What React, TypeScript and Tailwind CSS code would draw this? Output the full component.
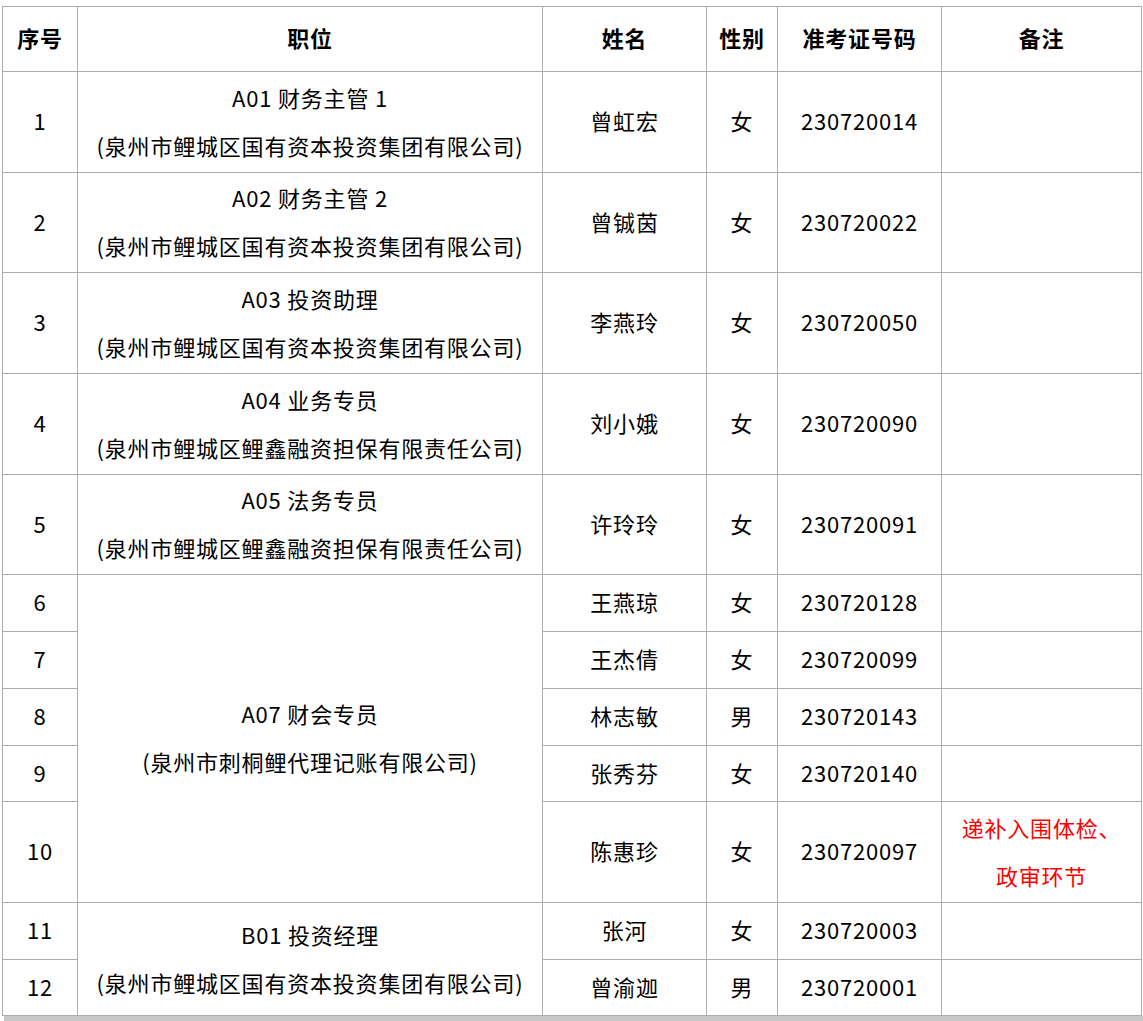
const FONT = "font-['Microsoft_YaHei','Noto_Sans_CJK_SC',sans-serif]";

type Row = {
  no: number;
  name: string;
  sex: string;
  id: string;
  h: string;
};

const ROWS: Row[] = [
  { no: 1, name: "曾虹宏", sex: "女", id: "230720014", h: "h-[101px]" },
  { no: 2, name: "曾铖茵", sex: "女", id: "230720022", h: "h-[100px]" },
  { no: 3, name: "李燕玲", sex: "女", id: "230720050", h: "h-[101px]" },
  { no: 4, name: "刘小娥", sex: "女", id: "230720090", h: "h-[101px]" },
  { no: 5, name: "许玲玲", sex: "女", id: "230720091", h: "h-[100px]" },
  { no: 6, name: "王燕琼", sex: "女", id: "230720128", h: "h-[57px]" },
  { no: 7, name: "王杰倩", sex: "女", id: "230720099", h: "h-[57px]" },
  { no: 8, name: "林志敏", sex: "男", id: "230720143", h: "h-[57px]" },
  { no: 9, name: "张秀芬", sex: "女", id: "230720140", h: "h-[56px]" },
  { no: 10, name: "陈惠珍", sex: "女", id: "230720097", h: "h-[101px]" },
  { no: 11, name: "张河", sex: "女", id: "230720003", h: "h-[57px]" },
  { no: 12, name: "曾渝迦", sex: "男", id: "230720001", h: "h-[56px]" },
];

// 职位 cells keyed by the row they start on
const POSTS: Record<number, { span: number; title: string; org: string }> = {
  0: { span: 1, title: "A01 财务主管 1", org: "(泉州市鲤城区国有资本投资集团有限公司)" },
  1: { span: 1, title: "A02 财务主管 2", org: "(泉州市鲤城区国有资本投资集团有限公司)" },
  2: { span: 1, title: "A03 投资助理", org: "(泉州市鲤城区国有资本投资集团有限公司)" },
  3: { span: 1, title: "A04 业务专员", org: "(泉州市鲤城区鲤鑫融资担保有限责任公司)" },
  4: { span: 1, title: "A05 法务专员", org: "(泉州市鲤城区鲤鑫融资担保有限责任公司)" },
  5: { span: 5, title: "A07 财会专员", org: "(泉州市刺桐鲤代理记账有限公司)" },
  10: { span: 2, title: "B01 投资经理", org: "(泉州市鲤城区国有资本投资集团有限公司)" },
};

const cell = "border border-[#acacac] text-center align-middle px-0 pt-0 pb-[3px]";

export default function App() {
  return (
    <div className={`min-h-[1021px] bg-white pl-[2px] pt-[6px] text-black ${FONT}`}>
      <table className="w-[1139px] table-fixed border-collapse text-[22px] tracking-[0.8px]">
        <colgroup>
          <col className="w-[75px]" />
          <col className="w-[465px]" />
          <col className="w-[164px]" />
          <col className="w-[71px]" />
          <col className="w-[164px]" />
          <col className="w-[200px]" />
        </colgroup>
        <thead>
          <tr className="h-[65px] font-bold">
            <th className={cell}>序号</th>
            <th className={cell}>职位</th>
            <th className={cell}>姓名</th>
            <th className={cell}>性别</th>
            <th className={cell}>准考证号码</th>
            <th className={cell}>备注</th>
          </tr>
        </thead>
        <tbody>
          {ROWS.map((r, i) => {
            const post = POSTS[i];
            return (
              <tr key={r.no} className={r.h}>
                <td className={cell}>{r.no}</td>
                {post && (
                  <td className={`${cell} leading-[48px]`} rowSpan={post.span}>
                    <div>{post.title}</div>
                    <div>{post.org}</div>
                  </td>
                )}
                <td className={cell}>{r.name}</td>
                <td className={cell}>{r.sex}</td>
                <td className={cell}>{r.id}</td>
                <td className={`${cell} leading-[48px] text-[#ff0000]`}>
                  {r.no === 10 && (
                    <>
                      递补入围体检、
                      <br />
                      政审环节
                    </>
                  )}
                </td>
              </tr>
            );
          })}
        </tbody>
      </table>
      <div className="ml-[2px] h-[5px] w-[1139px] bg-[#c8c8c8]" />
    </div>
  );
}
